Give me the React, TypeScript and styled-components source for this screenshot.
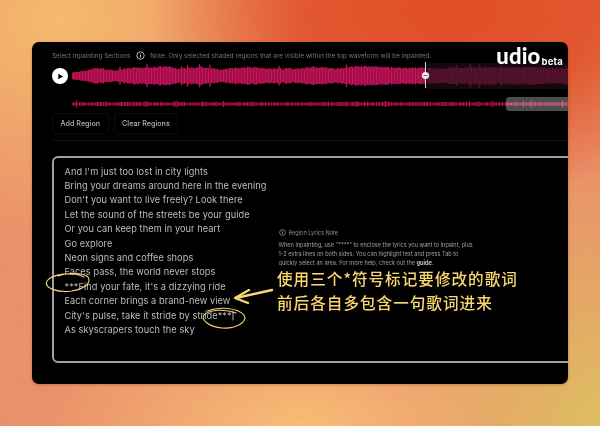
import React from 'react';
import styled, { createGlobalStyle } from 'styled-components';

const LYRICS = [
  "And I'm just too lost in city lights",
  'Bring your dreams around here in the evening',
  "Don't you want to live freely? Look there",
  'Let the sound of the streets be your guide',
  'Or you can keep them in your heart',
  'Go explore',
  'Neon signs and coffee shops',
  'Faces pass, the world never stops',
  "***Find your fate, it's a dizzying ride",
  'Each corner brings a brand-new view',
  "City's pulse, take it stride by stride***",
  'As skyscrapers touch the sky',
];

// [x, half height] knots read off the reference, x relative to the waveform start
const TOP_ENVELOPE: [number, number][] = [
  [0, 4], [10, 5], [25, 9], [42, 6], [58, 9], [80, 10], [98, 10], [108, 8], [128, 10], [150, 7],
  [172, 10], [200, 8], [225, 8], [240, 10], [262, 8], [290, 11], [320, 9], [352, 9], [365, 8],
  [400, 10], [430, 9], [460, 10], [496, 8],
];

const seeded = (i: number, seed: number) => {
  const v = Math.sin(i * 12.9898 + seed * 78.233) * 43758.5453;
  return v - Math.floor(v);
};

const envelopeAt = (x: number) => {
  for (let i = 1; i < TOP_ENVELOPE.length; i++) {
    const [x0, h0] = TOP_ENVELOPE[i - 1];
    const [x1, h1] = TOP_ENVELOPE[i];
    if (x <= x1) return h0 + ((x - x0) / (x1 - x0)) * (h1 - h0);
  }
  return 7;
};

const topBars = (from: number, to: number) => {
  let d = '';
  for (let x = from; x < to; x += 1.5) {
    const i = Math.round(x * 2);
    const spike = seeded(i, 3) > 0.96 ? 3 : 0;
    const h = envelopeAt(x) * (0.82 + seeded(i, 1) * 0.18) + spike;
    d += `M${x} ${14 - h}V${14 + h * 0.95}`;
  }
  return d;
};

const miniBars = () => {
  let d = '';
  for (let x = 0; x < 496; x += 1.5) {
    const i = Math.round(x * 2);
    const spike = seeded(i, 5) > 0.97 ? 1.2 : 0;
    const h = 1.2 + seeded(i, 7) * 1.1 + spike;
    d += `M${x} ${7 - h}V${7 + h}`;
  }
  return d;
};

const GlobalStyle = createGlobalStyle`
  html, body {
    margin: 0;
    padding: 0;
  }
  body {
    font-family: Inter, "Noto Sans", sans-serif;
  }
`;

const Page = styled.div`
  position: relative;
  width: 600px;
  height: 426px;
  box-sizing: border-box;
  padding: 42px 32px;
  overflow: hidden;
  background:
    radial-gradient(ellipse 300px 190px at 450px 10px, #e44f26 0%, rgba(228, 79, 38, 0.85) 50%, rgba(228, 79, 38, 0) 100%),
    radial-gradient(ellipse 260px 220px at 60px 20px, #f9bd6e 0%, rgba(249, 189, 110, 0) 100%),
    radial-gradient(ellipse 200px 260px at 600px 426px, #e2c263 0%, rgba(226, 194, 99, 0) 100%),
    radial-gradient(ellipse 260px 120px at 300px 426px, #fcc077 0%, rgba(252, 192, 119, 0) 100%),
    #ee936c;
`;

const Grain = styled.svg`
  position: absolute;
  inset: 0;
  opacity: 0.12;
  mix-blend-mode: multiply;
`;

const Panel = styled.main`
  position: relative;
  height: 342px;
  box-sizing: border-box;
  padding-top: 9px;
  background: #000;
  border-radius: 7px;
  overflow: hidden;
  box-shadow: 0 1px 3px rgba(60, 30, 0, 0.25);
`;

const Header = styled.header`
  display: flex;
  align-items: center;
  gap: 5.5px;
  height: 9px;
  padding-left: 20px;
  font-size: 6.2px;
  letter-spacing: 0.1px;
  color: #777;
  white-space: nowrap;
`;

const Logo = styled.div`
  position: absolute;
  top: 0;
  right: 5px;
  display: flex;
  align-items: flex-start;
  gap: 1px;
  color: #fff;
  font-family: Lato, Inter, sans-serif;
  font-weight: 900;
`;

const LogoWord = styled.span`
  font-size: 22px;
  line-height: 27px;
  letter-spacing: 0.2px;
`;

const LogoBeta = styled.span`
  margin-top: 13px;
  font-size: 9.5px;
  line-height: 14px;
  font-family: Inter, sans-serif;
  font-weight: 700;
  letter-spacing: 0.2px;
`;

const PlayerRow = styled.div`
  display: flex;
  align-items: center;
  gap: 4px;
  height: 28px;
  margin-top: 2px;
  padding-left: 20px;
`;

const PlayButton = styled.button`
  display: flex;
  align-items: center;
  justify-content: center;
  flex: none;
  width: 16px;
  height: 16px;
  padding: 0;
  border: none;
  border-radius: 50%;
  background: #fff;
`;

const MiniRow = styled.div`
  height: 14px;
  margin-top: 5px;
  padding-left: 40px;
`;

const Buttons = styled.div`
  display: flex;
  gap: 5px;
  margin-top: 4px;
  padding-left: 20px;
`;

const RegionButton = styled.button`
  height: 21px;
  padding: 0 7.5px;
  background: #000;
  border: 1px solid #0e0e0e;
  border-radius: 4px;
  color: #b5b5b5;
  font-family: Inter, sans-serif;
  font-size: 7.2px;
  font-weight: 500;
`;

const Divider = styled.hr`
  height: 1px;
  margin: 6px 0 0 20px;
  border: none;
  background: #0f0f0f;
`;

const LyricsBox = styled.section`
  display: flex;
  box-sizing: border-box;
  width: 540px;
  height: 207px;
  margin: 15px 0 0 20px;
  padding: 6.5px 10.5px;
  border: 2px solid #a0a0a0;
  border-radius: 6px;
`;

const Lyrics = styled.div`
  flex: none;
  width: 214px;
  font-size: 9.2px;
  line-height: 14.4px;
  letter-spacing: 0.08px;
  color: #bdbdbd;
  white-space: nowrap;
`;

const LyricLine = styled.div``;

const Aside = styled.aside`
  padding-top: 64.5px;
`;

const NoteTitle = styled.div`
  display: flex;
  align-items: center;
  gap: 3px;
  font-size: 5.6px;
  color: #8c8c8c;
`;

const NoteBody = styled.p`
  width: 210px;
  margin: 5px 0 0;
  font-size: 5.6px;
  line-height: 9px;
  color: #a0a0a0;
  white-space: nowrap;
`;

const GuideLink = styled.b`
  color: #ddd;
  font-weight: 600;
`;

const Callout = styled.div`
  display: flex;
  flex-direction: column;
  gap: 8px;
  margin: 2px 0 0 -1.5px;
  font-family: "Noto Sans CJK SC", sans-serif;
  font-size: 15.6px;
  line-height: 16px;
  letter-spacing: 1px;
  font-weight: 500;
  color: #fbd772;
  white-space: nowrap;
`;

const Sketch = styled.svg`
  position: absolute;
  inset: 0;
  pointer-events: none;
`;

const InfoIcon = ({ size, color }: { size: number; color: string }) => (
  <svg width={size} height={size} viewBox="0 0 16 16" fill="none" stroke={color}>
    <circle cx="8" cy="8" r="6.6" strokeWidth="1.6" />
    <path d="M8 7.2V11.4" strokeWidth="1.8" />
    <path d="M8 4.4V5.8" strokeWidth="1.8" />
  </svg>
);

export default function App() {
  return (
    <Page>
      <GlobalStyle />
      <Grain width="600" height="426">
        <filter id="grain">
          <feTurbulence type="fractalNoise" baseFrequency="0.9" numOctaves="2" />
          <feColorMatrix type="saturate" values="0" />
        </filter>
        <rect width="600" height="426" filter="url(#grain)" />
      </Grain>
      <Panel>
        <Header>
          <span>Select Inpainting Sections</span>
          <InfoIcon size={9} color="#c8c8c8" />
          <span>Note: Only selected shaded regions that are visible within the top waveform will be inpainted.</span>
        </Header>
        <Logo>
          <LogoWord>udio</LogoWord>
          <LogoBeta>beta</LogoBeta>
        </Logo>
        <PlayerRow>
          <PlayButton aria-label="Play">
            <svg width="7" height="7" viewBox="0 0 8 8">
              <path d="M1.5 .8L7 4 1.5 7.2Z" fill="#000" />
            </svg>
          </PlayButton>
          <svg width="496" height="28" viewBox="0 0 496 28">
            <rect x="354" y="1" width="142" height="26" fill="#120a0d" />
            <path d={topBars(0, 353)} stroke="#c9145c" strokeWidth="1.3" />
            <path d={topBars(356, 496)} stroke="#5a1230" strokeWidth="1.3" />
            <path d="M353.5 0V26" stroke="#d8d8d8" strokeWidth="1" />
            <circle cx="353.5" cy="13.5" r="3.6" fill="#e8e8e8" />
            <path d="M351.5 13.5h4" stroke="#777" strokeWidth="1" />
          </svg>
        </PlayerRow>
        <MiniRow>
          <svg width="496" height="14" viewBox="0 0 496 14">
            <path d={miniBars()} stroke="#c2134f" strokeWidth="1.1" />
            <rect x="434" y="0" width="70" height="14" rx="3" fill="#fff" fillOpacity="0.3" />
          </svg>
        </MiniRow>
        <Buttons>
          <RegionButton>Add Region</RegionButton>
          <RegionButton>Clear Regions</RegionButton>
        </Buttons>
        <Divider />
        <LyricsBox>
          <Lyrics>
            {LYRICS.map((line) => (
              <LyricLine key={line}>{line}</LyricLine>
            ))}
          </Lyrics>
          <Aside>
            <NoteTitle>
              <InfoIcon size={7} color="#aaa" />
              Region Lyrics Note
            </NoteTitle>
            <NoteBody>
              When inpainting, use "****" to enclose the lyrics you want to inpaint, plus
              <br />
              1-2 extra lines on both sides. You can highlight text and press Tab to
              <br />
              quickly select an area. For more help, check out the <GuideLink>guide</GuideLink>.
            </NoteBody>
            <Callout>
              <span>使用三个*符号标记要修改的歌词</span>
              <span>前后各自多包含一句歌词进来</span>
            </Callout>
          </Aside>
        </LyricsBox>
        <Sketch width="536" height="342" viewBox="32 42 536 342" fill="none" stroke="#f3cf78" strokeLinecap="round">
          <path d="M84 277C72 271 52 274 47 281C43 288 58 293 72 291C84 289 92 283 88 277C83 272 66 273 58 276" strokeWidth="1.1" />
          <path d="M207 311C219 306 238 308 244 315C248 322 236 329 222 328C210 327 200 320 204 315C210 309 226 309 236 313" strokeWidth="1.1" />
          <path d="M272 290L236 298" stroke="#fbd772" strokeWidth="2.4" />
          <path d="M249 290L235 298L248 303" stroke="#fbd772" strokeWidth="2.4" strokeLinejoin="round" />
          <path d="M233 311V320" stroke="#ddd" strokeWidth="0.8" />
        </Sketch>
      </Panel>
    </Page>
  );
}
